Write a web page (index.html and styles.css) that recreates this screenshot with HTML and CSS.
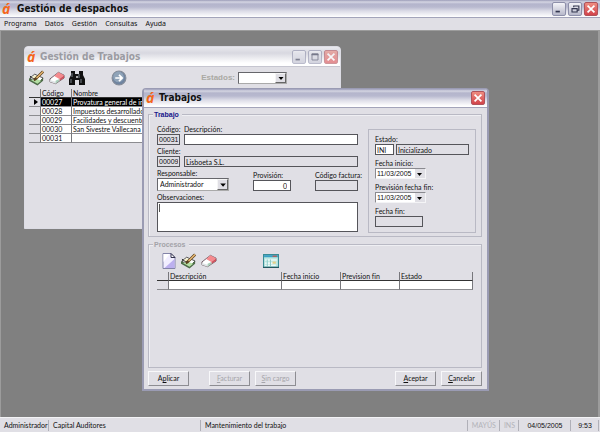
FILE: index.html
```html
<!DOCTYPE html>
<html lang="es">
<head>
<meta charset="utf-8">
<title>Gestión de despachos</title>
<link rel="stylesheet" href="styles.css">
</head>
<body>
<svg class="defs" aria-hidden="true">
  <symbol id="i-min" viewBox="0 0 14 14"><path d="M3 10h5" stroke="currentColor" stroke-width="2"/></symbol>
  <symbol id="i-max" viewBox="0 0 14 14"><path d="M3.5 3.5h7v7h-7z" fill="none" stroke="currentColor"/><path d="M3 4h8" stroke="currentColor" stroke-width="2"/></symbol>
  <symbol id="i-restore" viewBox="0 0 14 14"><path d="M5.5 5V3.5h6v5H10M5 3.5h7M3.5 6.5h6v4h-6zM3 6.5h7" fill="none" stroke="currentColor" stroke-width="1.3"/></symbol>
  <symbol id="i-close" viewBox="0 0 14 14"><path d="M3 3l8 8M11 3l-8 8" stroke="#fff" stroke-width="2"/></symbol>
  <symbol id="i-down" viewBox="0 0 8 8"><path d="M2 3h5L4.500 6z" fill="#000"/></symbol>
  <symbol id="i-edit" viewBox="0 0 17 16"><path d="M1 8l5-4 9 4-6 6z" fill="#fff" stroke="#444"/><path d="M0 8l9 5 6-5v3l-6 5-9-5z" fill="#4d6b48"/><path d="M2 10l7 4 4-3-5-2z" fill="#b4dfa4"/><path d="M3 7l3-2 5 2-3 3z" fill="#f4efc8"/><path d="M15 1L7 9l-2 1" stroke="#5a4220" stroke-width="3" fill="none"/><path d="M15 1L8 8" stroke="#e9b873" stroke-width="1.500"/><path d="M1 6l4 3" stroke="#222"/></symbol>
  <symbol id="i-eraser" viewBox="0 0 17 14"><path d="M1 8l9-7 6 3v3l-9 6-6-2z" fill="#fff" stroke="#6d5a62"/><path d="M5.500 5L10 1l6 3-5 4z" fill="#f58a8e"/><path d="M11 8l5-4v3l-5 3z" fill="#cf4f5a"/><path d="M1 9l6 2v2l-6-2z" fill="#dfe4e6"/><path d="M7 10l4-2v2l-4 3z" fill="#a9cfbb"/></symbol>
  <symbol id="i-find" viewBox="0 0 16 16"><path d="M2 1h4v3h4V1h4v4l2 4v6h-6v-5H6v5H0V9l2-4z" fill="#111"/><path d="M3 3v4M2 9v4M10 4v4M12 9v4" stroke="#7d858c"/><path d="M7 6h2v2H7z" fill="#aaa"/></symbol>
  <symbol id="i-go" viewBox="0 0 15 15"><circle cx="7.500" cy="7.500" r="6.500" fill="#6f84a0" stroke="#858c98"/><circle cx="7" cy="6.500" r="5" fill="#8fa3b8"/><path d="M4 7.500h7M7.500 4.500l3 3-3 3" fill="none" stroke="#fff" stroke-width="1.600"/></symbol>
  <symbol id="i-new" viewBox="0 0 13 16"><path d="M.5.5h8l4 4v11H.5z" fill="#f1eeff" stroke="#8384a8"/><path d="M12 6v9H2z" fill="#bcb0ef"/><path d="M1 1h6L1 9z" fill="#fff"/><path d="M8.500.5v4h4z" fill="#fff" stroke="#33334d"/></symbol>
  <symbol id="i-cal" viewBox="0 0 15 13"><path d="M.5.5h14v12H.5z" fill="#bfe9e2" stroke="#388c96"/><path d="M1 1h13v2H1z" fill="#3b9fc4"/><path d="M9 2h4" stroke="#d8503c"/><path d="M2 5.500h11M2 8.500h7M2 10.500h10" stroke="#fff"/><path d="M4 5v7M7 5v7" stroke="#8fcdca"/><path d="M9 7h3v2H9z" fill="#e8cf86"/><path d="M0 12.500h15" stroke="#24545c"/></symbol>
</svg>

<div class="app">
  <header class="titlebar main-title">
    <span class="logo">á</span><h1>Gestión de despachos</h1>
    <div class="controls">
      <button class="ctl" aria-label="Minimizar"><svg><use href="#i-min"/></svg></button>
      <button class="ctl" aria-label="Restaurar"><svg><use href="#i-restore"/></svg></button>
      <button class="ctl close" aria-label="Cerrar"><svg><use href="#i-close"/></svg></button>
    </div>
  </header>
  <nav class="menu">
    <a href="#programa">Programa</a><a href="#datos">Datos</a><a href="#gestion">Gestión</a><a href="#consultas">Consultas</a><a href="#ayuda">Ayuda</a>
  </nav>

  <main class="desktop">
    <section class="window list-window">
      <header class="titlebar">
        <span class="logo">á</span><h2>Gestión de Trabajos</h2>
        <div class="controls">
          <button class="ctl" aria-label="Minimizar"><svg><use href="#i-min"/></svg></button>
          <button class="ctl" aria-label="Maximizar"><svg><use href="#i-max"/></svg></button>
          <button class="ctl close" aria-label="Cerrar"><svg><use href="#i-close"/></svg></button>
        </div>
      </header>
      <div class="toolbar">
        <button class="tool" aria-label="Editar"><svg><use href="#i-edit"/></svg></button>
        <button class="tool" aria-label="Borrar"><svg><use href="#i-eraser"/></svg></button>
        <button class="tool" aria-label="Buscar"><svg><use href="#i-find"/></svg></button>
        <button class="tool go" aria-label="Ir"><svg><use href="#i-go"/></svg></button>
        <div class="filter">
          <label for="estados">Estados:</label>
          <div class="combo"><select id="estados"><option></option></select><svg class="arrow"><use href="#i-down"/></svg></div>
        </div>
      </div>
      <table class="grid jobs">
        <colgroup><col class="c-mark"><col class="c-code"><col></colgroup>
        <thead><tr><th></th><th>Código</th><th>Nombre</th></tr></thead>
        <tbody>
          <tr class="selected"><th><i class="marker"></i></th><td>00027</td><td>Provatura general de ins</td></tr>
          <tr><th></th><td>00028</td><td>Impuestos desarrollados</td></tr>
          <tr><th></th><td>00029</td><td>Facilidades y descuentos</td></tr>
          <tr><th></th><td>00030</td><td>San Sivestre Vallecana</td></tr>
          <tr><th></th><td>00031</td><td></td></tr>
        </tbody>
      </table>
    </section>

    <section class="window dialog">
      <header class="titlebar">
        <span class="logo">á</span><h2>Trabajos</h2>
        <div class="controls">
          <button class="ctl close" aria-label="Cerrar"><svg><use href="#i-close"/></svg></button>
        </div>
      </header>
      <form class="dialog-body">
        <section class="group job">
          <h3>Trabajo</h3>
          <div class="fields">
            <div class="row">
              <div class="field code"><label for="codigo">Código:</label><input id="codigo" class="locked" value="00031" readonly></div>
              <div class="field grow"><label for="desc">Descripción:</label><input id="desc"></div>
            </div>
            <div class="row">
              <div class="field code"><label for="cliente">Cliente:</label><input id="cliente" class="locked" value="00009" readonly></div>
              <div class="field grow"><input class="locked" aria-label="Nombre del cliente" value="Lisboeta S.L." readonly></div>
            </div>
            <div class="row spread">
              <div class="field resp"><label for="resp">Responsable:</label>
                <div class="combo"><select id="resp"><option>Administrador</option></select><svg class="arrow"><use href="#i-down"/></svg></div></div>
              <div class="field prov"><label for="prov">Provisión:</label><input id="prov" class="number" value="0"></div>
              <div class="field fact"><label for="fact">Código factura:</label><input id="fact" class="locked" readonly></div>
            </div>
            <div class="field"><label for="obs">Observaciones:</label><textarea id="obs"></textarea></div>
          </div>
          <div class="status-panel">
            <div class="field"><label for="estado">Estado:</label>
              <div class="pair"><input id="estado" class="short" value="INI"><input class="locked" aria-label="Nombre del estado" value="Inicializado" readonly></div></div>
            <div class="field"><label for="inicio">Fecha inicio:</label>
              <div class="date"><input id="inicio" value="11/03/2005"><button type="button" aria-label="Abrir calendario"><svg><use href="#i-down"/></svg></button></div></div>
            <div class="field"><label for="prevision">Previsión fecha fin:</label>
              <div class="date"><input id="prevision" value="11/03/2005"><button type="button" aria-label="Abrir calendario"><svg><use href="#i-down"/></svg></button></div></div>
            <div class="field end"><label for="fin">Fecha fin:</label><input id="fin" class="locked" readonly></div>
          </div>
        </section>

        <section class="group processes">
          <h3>Procesos</h3>
          <div class="toolbar">
            <button type="button" class="tool" aria-label="Nuevo"><svg><use href="#i-new"/></svg></button>
            <button type="button" class="tool" aria-label="Editar"><svg><use href="#i-edit"/></svg></button>
            <button type="button" class="tool" aria-label="Borrar"><svg><use href="#i-eraser"/></svg></button>
            <button type="button" class="tool calendar" aria-label="Calendario"><svg><use href="#i-cal"/></svg></button>
          </div>
          <table class="grid">
            <colgroup><col class="c-mark"><col><col class="c-date"><col class="c-date"><col class="c-state"></colgroup>
            <thead><tr><th></th><th>Descripción</th><th>Fecha inicio</th><th>Prevision fin</th><th>Estado</th></tr></thead>
            <tbody><tr><th></th><td></td><td></td><td></td><td></td></tr></tbody>
          </table>
        </section>

        <footer class="actions">
          <button type="button" class="btn">A<u>p</u>licar</button>
          <button type="button" class="btn second" disabled><u>F</u>acturar</button>
          <button type="button" class="btn" disabled><u>S</u>in cargo</button>
          <button type="button" class="btn accept"><u>A</u>ceptar</button>
          <button type="button" class="btn"><u>C</u>ancelar</button>
        </footer>
      </form>
    </section>
  </main>

  <footer class="statusbar">
    <span class="s-user">Administrador</span><span class="s-firm">Capital Auditores</span><span class="s-msg">Mantenimiento del trabajo</span><span class="off">MAYÚS</span><span class="off">INS</span><span class="s-date">04/05/2005</span><span class="s-time">9:53</span>
  </footer>
</div>
</body>
</html>
```
FILE: styles.css
```css
:root {
  --face: #e0dfe5;
  --line: #b9b9c4;
  --dark: #55555a;
}

* { box-sizing: border-box; }

body {
  margin: 0;
  color: #111;
  font: 7px/9px Lato, "Liberation Sans", sans-serif;
  font-variant-ligatures: none;
}

.defs { display: none; }
svg { display: block; }
h1, h2, h3 { margin: 0; }

input, select, textarea, button {
  margin: 0;
  padding: 0;
  border: 0;
  border-radius: 0;
  color: inherit;
  font: inherit;
  appearance: none;
  outline: 0;
}

.app {
  display: flex;
  flex-direction: column;
  height: 100vh;
  background: var(--face);
}

/* Title bars */
.titlebar {
  display: flex;
  align-items: center;
  height: 20px;
  padding: 0 2px;
  border-bottom: 1px solid #a3a4ba;
  background: linear-gradient(#9b9cb8 0, #d5d6e3 2px, #b4b5cc 4px, #b8b9cf 7px, #dcdce7 11px, #fff 17px);
}

.titlebar h1, .titlebar h2 {
  color: #111;
  font: bold 10px/16px "DejaVu Sans Condensed", "DejaVu Sans", sans-serif;
}

.logo {
  width: 13px;
  color: #f4661b;
  font: italic bold 14px/14px "Open Sans", sans-serif;
}

.main-title { height: 18px; }
.main-title .logo { width: 15px; }

.controls { display: flex; gap: 2px; margin-left: auto; }

.ctl {
  width: 14px;
  height: 14px;
  border: 1px solid #8e90aa;
  border-radius: 2px;
  background: linear-gradient(#f4f4f8, #b7b8ca);
  color: #33364f;
}

.ctl svg { width: 12px; height: 12px; }
.ctl.close { border-color: #b0525a; background: linear-gradient(#ee8c80, #d2434a); }

.menu {
  display: flex;
  gap: 8px;
  height: 12px;
  padding: 0 4px;
  font: 7px/11px "Noto Sans", sans-serif;
}

.menu a { color: inherit; text-decoration: none; }

/* Desktop and windows */
.desktop {
  position: relative;
  flex: 1;
  border: solid #9c9c9c;
  border-width: 1px 2px 0 1px;
  background: #808080;
}

.window {
  position: absolute;
  display: flex;
  flex-direction: column;
  border: 1px solid #9a9bb3;
  border-radius: 4px 4px 0 0;
  background: var(--face);
  overflow: hidden;
}

.list-window { left: 23px; top: 15px; width: 317px; height: 183px; border-color: #dcdce4; }
.list-window .titlebar { border-color: #c6c6d0; background: linear-gradient(#e9e9ee, #d8d8e0 6px, #fff 16px); }
.list-window h2 { color: #9b9ba2; }
.list-window .ctl { opacity: .6; }
.dialog { left: 141px; top: 57px; width: 347px; height: 303px; border-width: 1px 2px 2px; }

/* Toolbars */
.toolbar { display: flex; align-items: center; gap: 4px; height: 20px; }
.tool { background: none; }
.tool svg { width: 16px; height: 16px; }
.list-window .toolbar { height: 21px; padding: 0 4px; }
.tool.go { margin-left: 22px; }
.filter { display: flex; align-items: center; gap: 3px; margin-left: auto; padding-right: 49px; }
.filter label { color: #aaa9a3; font: bold 8px/9px "Liberation Sans", sans-serif; }
.filter .combo { width: 49px; height: 12px; }

/* Form fields */
.field { display: flex; flex-direction: column; }
.field label { white-space: nowrap; }

.field input {
  width: 100%;
  height: 11px;
  padding: 0 1px;
  border: 1px solid var(--dark);
  background: #fff;
}

.field .locked { background: var(--face); }
.field .number { text-align: right; padding-right: 3px; }

.field textarea {
  height: 30px;
  padding: 1px;
  border: 1px solid var(--dark);
  background: #fff linear-gradient(#555, #555) 1px 1px / 1px 8px no-repeat;
  resize: none;
}

.combo {
  display: flex;
  height: 13px;
  border: 1px solid;
  border-color: #66666b #aaa #aaa #66666b;
  background: #fff;
}

.combo select { flex: 1; min-width: 0; padding-left: 2px; background: #fff; }

.arrow {
  width: 11px;
  height: 100%;
  border: 1px solid;
  border-color: #f5f5f5 #666 #666 #f5f5f5;
  background: var(--face);
}

.row { display: flex; align-items: flex-end; gap: 4px; }
.row.spread { justify-content: space-between; }
.grow { flex: 1; }
.code { width: 23px; }
.code input { font-family: "Liberation Sans", sans-serif; }
.resp { width: 72px; }
.prov { width: 38px; }
.fact { width: 43px; }

/* Dialog */
.dialog-body { flex: 1; display: flex; flex-direction: column; padding: 6px 5px 3px 4px; }

.group { border: 1px solid var(--line); box-shadow: inset 1px 1px #efeff3; }

.group h3 {
  width: max-content;
  margin: -5px 0 0 4px;
  padding: 0 3px 0 1px;
  background: var(--face);
  color: #17178a;
  font: bold 7px/9px "Liberation Sans", sans-serif;
}

.job {
  display: grid;
  grid-template-columns: 1fr 108px;
  grid-template-rows: 9px 1fr;
  column-gap: 10px;
  height: 123px;
  padding: 0 5px 0 8px;
}

.job h3 { grid-column: 1 / -1; margin-left: -4px; }
.fields { display: flex; flex-direction: column; gap: 2px; padding-top: 1px; }

.status-panel {
  display: flex;
  flex-direction: column;
  gap: 4px;
  margin: 5px 0 6px;
  padding: 5px 6px;
  border: 1px solid var(--line);
}

.pair { display: flex; gap: 2px; }
.pair .short { width: 19px; flex: none; }

.date {
  display: flex;
  width: 51px;
  height: 11px;
  border: 1px solid;
  border-color: #8a8a90 #f4f4f6 #f4f4f6 #8a8a90;
  background: #fff;
}

.date input { flex: 1; min-width: 0; height: 9px; border: 0; font-family: "Liberation Sans", sans-serif; }
.date button { width: 10px; background: var(--face); }
.date svg { width: 8px; height: 8px; }
.end input { width: 48px; }

.processes { height: 124px; margin-top: 7px; padding: 0 8px; }
.processes h3 { margin-left: -4px; color: #a3a3a8; }
.processes .toolbar { height: 23px; padding-left: 4px; }
.tool.calendar { margin-left: 42px; }

/* Data tables */
.grid {
  width: 100%;
  table-layout: fixed;
  border-collapse: separate;
  border-spacing: 0;
}

.grid th, .grid td {
  height: 9px;
  padding: 0 1px;
  border-right: 1px solid #77777c;
  border-bottom: 1px solid #8c8c90;
  overflow: hidden;
  font-weight: normal;
  line-height: 8px;
  text-align: left;
  white-space: nowrap;
}

.grid th { background: var(--face); }
.grid td { background: #fff; }
.grid thead th { border-bottom-color: #333; }
.grid .c-mark { width: 12px; }
.grid .c-code { width: 31px; }
.grid .c-date { width: 59px; }
.grid .c-state { width: 73px; }
.grid.jobs { width: calc(100% - 8px); margin: 1px 4px 0; }
.grid.jobs .selected td { background: #000; color: #fff; }

.marker {
  display: block;
  width: 0;
  margin-left: 4px;
  border: solid transparent;
  border-width: 3px 0 3px 4px;
  border-left-color: #000;
}

/* Dialog buttons */
.actions { display: flex; gap: 5px; margin-top: 3px; }

.btn {
  width: 41px;
  height: 15px;
  border: 1px solid;
  border-color: #f8f8fa #8d8d92 #8d8d92 #f8f8fa;
  background: var(--face);
}

.btn:disabled { color: #a5a5aa; }
.btn.second { margin-left: 15px; }
.btn.accept { margin-left: auto; }

/* Status bar */
.statusbar {
  display: flex;
  gap: 1px;
  height: 15px;
  padding: 2px 1px 1px;
  border-top: 1px solid #f3f3f5;
}

.statusbar span {
  padding: 1px 3px;
  border-right: 1px solid #b0b0b8;
  white-space: nowrap;
}

.s-user { width: 48px; }
.s-firm { width: 151px; }
.s-msg { flex: 1; }
.statusbar .off { color: #b3b3b9; }
.statusbar .s-date, .statusbar .s-time { font-family: "Liberation Sans", sans-serif; text-align: center; }
.s-date { width: 51px; }
.s-time { width: 27px; }
```
